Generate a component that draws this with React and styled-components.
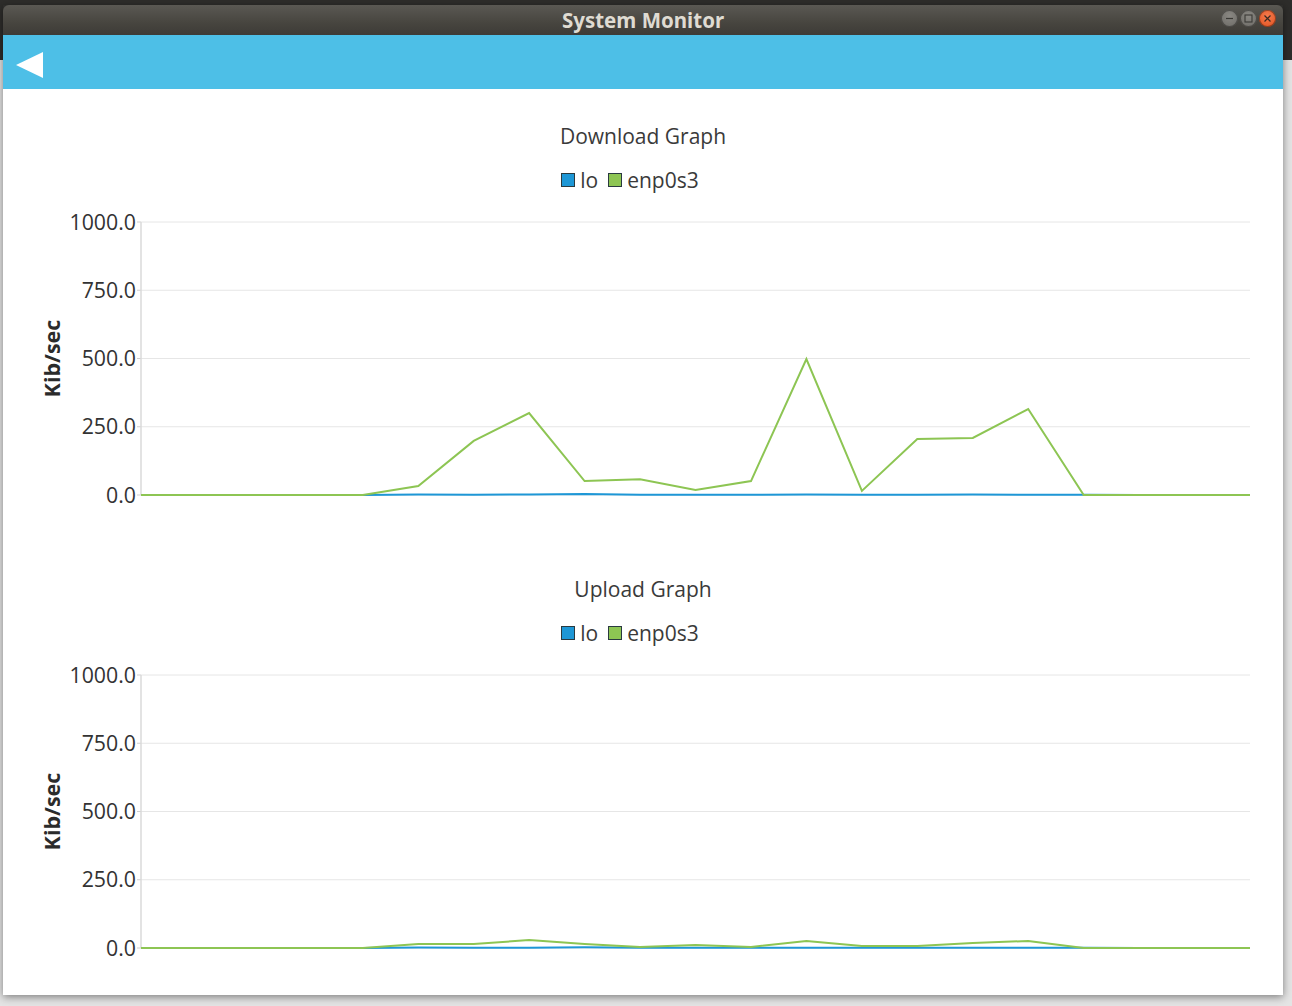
import React from 'react'
import styled, { createGlobalStyle } from 'styled-components'

const GlobalStyle = createGlobalStyle`
  html, body {
    margin: 0;
    padding: 0;
  }
  body {
    width: 1292px;
    height: 1006px;
    overflow: hidden;
    font-family: "Open Sans", "Noto Sans", sans-serif;
  }
`

const Desktop = styled.div`
  width: 1292px;
  height: 1006px;
  box-sizing: border-box;
  padding: 5px 9px 11px 3px;
  background: linear-gradient(180deg, #2e2d2b 0, #2e2d2b 60px, #e4e4e4 60px, #e4e4e4 100%);
`

const Window = styled.div`
  display: flex;
  flex-direction: column;
  height: 100%;
  box-shadow: 0 2px 8px rgba(0, 0, 0, 0.45);
`

const TitleBar = styled.div`
  height: 30px;
  position: relative;
  display: flex;
  align-items: center;
  justify-content: center;
  border-radius: 6px 6px 0 0;
  background: linear-gradient(180deg, #5a5853 0%, #47453f 60%, #3d3b37 100%);
  color: #dfdbd2;
  font-family: "Noto Sans", "Open Sans", sans-serif;
  font-weight: 700;
  font-size: 20.5px;
`

const Controls = styled.div`
  position: absolute;
  right: 7px;
  top: 5px;
  display: flex;
  gap: 2px;
`

const Ctrl = styled.div`
  width: 17px;
  height: 17px;
  border-radius: 50%;
  display: flex;
  align-items: center;
  justify-content: center;
  background: ${p => p.close
    ? 'radial-gradient(circle at 50% 35%, #f47a4c, #e0511f)'
    : 'radial-gradient(circle at 50% 35%, #8a8883, #6b6964)'};
  box-shadow: inset 0 0 0 1px rgba(0, 0, 0, 0.35);
`

const Header = styled.div`
  height: 54px;
  box-sizing: border-box;
  padding: 5px 0 0 13px;
  background: #4dbfe7;
  display: flex;
  align-items: center;
`

const Content = styled.div`
  flex: 1;
  background: #fff;
  display: flex;
  flex-direction: column;
`

const Section = styled.section`
  height: 453px;
  box-sizing: border-box;
  padding-top: 34px;
  display: flex;
  flex-direction: column;
  align-items: center;
`

const Title = styled.div`
  font-size: 21px;
  line-height: 26px;
  color: #3a3a3a;
`

const Legend = styled.div`
  margin-top: 18px;
  padding-right: 26px;
  display: flex;
  align-items: center;
  gap: 10px;
  font-size: 21px;
  line-height: 26px;
  color: #3a3a3a;
`

const LegendItem = styled.div`
  display: flex;
  align-items: center;
  gap: 5px;
`

const Swatch = styled.span`
  width: 14px;
  height: 14px;
  box-sizing: border-box;
  border: 1px solid #2a3a40;
  background: ${p => p.color};
`

const ChartSvg = styled.svg`
  display: block;
  font-family: "Open Sans", "Noto Sans", sans-serif;
`

const BLUE = '#1e97d6'
const GREEN = '#8dc553'

const downloadData = {
  lo: [0, 0, 0, 0, 0, 2, 1, 2, 4, 1, 1, 1, 2, 1, 1, 2, 1, 1, 0, 0, 0],
  enp: [0, 0, 0, 0, 0, 33, 198, 300, 51, 58, 18, 51, 498, 15, 205, 209, 315, 0, 0, 0, 0]
}

const uploadData = {
  lo: [0, 0, 0, 0, 0, 2, 1, 1, 3, 1, 1, 1, 1, 1, 1, 1, 1, 1, 0, 0, 0],
  enp: [0, 0, 0, 0, 0, 15, 15, 29, 15, 4, 11, 4, 26, 7, 7, 18, 26, 0, 0, 0, 0]
}

const W = 1280
const H = 349
const X0 = 138
const X1 = 1247
const Y0 = 29
const Y1 = 302
const ticks = [1000, 750, 500, 250, 0]

const sx = i => X0 + (i * (X1 - X0)) / 20
const sy = v => Y1 - (v / 1000) * (Y1 - Y0)
const toPoints = arr => arr.map((v, i) => `${sx(i).toFixed(1)},${sy(v).toFixed(1)}`).join(' ')

const Chart = ({ data }) => (
  <ChartSvg width={W} height={H} viewBox={`0 0 ${W} ${H}`}>
    {ticks.map(t => (
      <g key={t}>
        <line x1={X0} x2={X1} y1={sy(t)} y2={sy(t)} stroke="#e6e6e6" strokeWidth="1" />
        <line x1={X0 - 4} x2={X0} y1={sy(t)} y2={sy(t)} stroke="#cfcfcf" strokeWidth="1" />
        <text x={X0 - 5} y={sy(t) + 7.5} textAnchor="end" fontSize="21.3" fill="#333">
          {t.toFixed(1)}
        </text>
      </g>
    ))}
    <line x1={X0} x2={X0} y1={Y0} y2={Y1} stroke="#dadada" strokeWidth="1.5" />
    <text
      transform={`translate(57 ${(Y0 + Y1) / 2}) rotate(-90)`}
      textAnchor="middle"
      fontSize="21.5"
      fontWeight="700"
      fill="#2b2b2b"
    >
      Kib/sec
    </text>
    <polyline points={toPoints(data.lo)} fill="none" stroke={BLUE} strokeWidth="2" />
    <polyline points={toPoints(data.enp)} fill="none" stroke={GREEN} strokeWidth="2" />
  </ChartSvg>
)

const Graph = ({ title, data }) => (
  <Section>
    <Title>{title}</Title>
    <Legend>
      <LegendItem><Swatch color={BLUE} />lo</LegendItem>
      <LegendItem><Swatch color={GREEN} />enp0s3</LegendItem>
    </Legend>
    <Chart data={data} />
  </Section>
)

export default function App() {
  return (
    <>
      <GlobalStyle />
      <Desktop>
        <Window>
          <TitleBar>
            System Monitor
            <Controls>
              <Ctrl>
                <svg width="9" height="9" viewBox="0 0 9 9"><path d="M1 4.5h7" stroke="#3a3935" strokeWidth="1.2" /></svg>
              </Ctrl>
              <Ctrl>
                <svg width="9" height="9" viewBox="0 0 9 9"><rect x="1" y="1" width="7" height="7" fill="none" stroke="#3a3935" strokeWidth="1.1" /></svg>
              </Ctrl>
              <Ctrl close>
                <svg width="9" height="9" viewBox="0 0 9 9"><path d="M1.5 1.5l6 6M7.5 1.5l-6 6" stroke="#3a2a22" strokeWidth="1.2" /></svg>
              </Ctrl>
            </Controls>
          </TitleBar>
          <Header>
            <svg width="27" height="26" viewBox="0 0 27 26">
              <polygon points="0,13 27,0 27,26" fill="#fff" />
            </svg>
          </Header>
          <Content>
            <Graph title="Download Graph" data={downloadData} />
            <Graph title="Upload Graph" data={uploadData} />
          </Content>
        </Window>
      </Desktop>
    </>
  )
}
